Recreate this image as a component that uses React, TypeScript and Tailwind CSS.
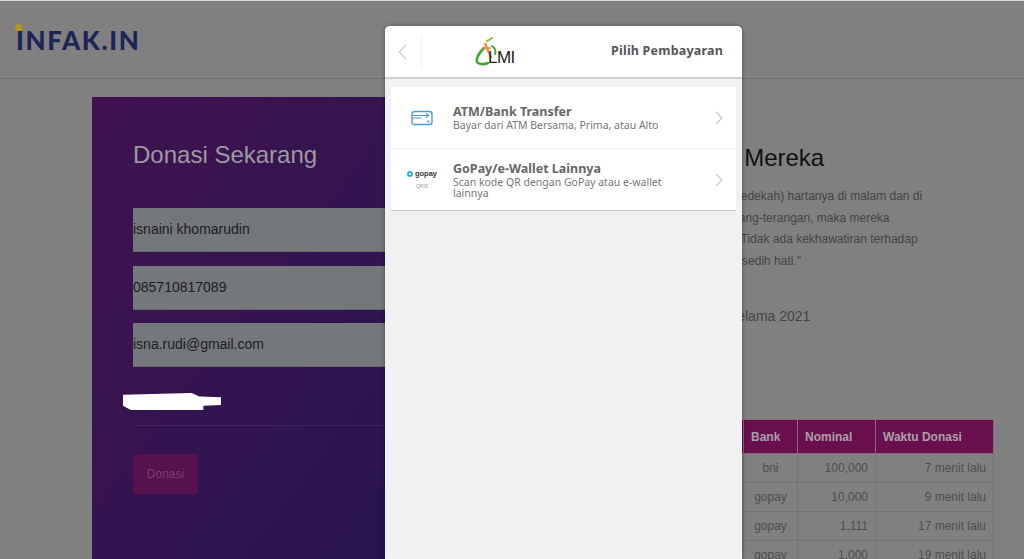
import React from "react";

const quoteLines = [
  "Orang-orang yang menginfakkan (sedekah) hartanya di malam dan di",
  "siang hari secara sembunyi dan terang-terangan, maka mereka",
  "mendapat pahala di sisi Tuhannya. Tidak ada kekhawatiran terhadap",
  "mereka dan tidak (pula) mereka bersedih hati.\"",
];

const donations = [
  { name: "Hamba Allah", bank: "bni", nominal: "100,000", time: "7 menit lalu" },
  { name: "Hamba Allah", bank: "gopay", nominal: "10,000", time: "9 menit lalu" },
  { name: "Hamba Allah", bank: "gopay", nominal: "1,111", time: "17 menit lalu" },
  { name: "Hamba Allah", bank: "gopay", nominal: "1,000", time: "19 menit lalu" },
];

const fields = ["isnaini khomarudin", "085710817089", "isna.rudi@gmail.com"];

const Chevron = () => (
  <svg width="8" height="14" viewBox="0 0 8 14" fill="none" stroke="#c9c9c9" strokeWidth="1.2">
    <path d="M1 1l6 6-6 6" />
  </svg>
);

const LmiLogo = () => (
  <div className="relative w-[36px] h-[30px]">
    <svg width="36" height="30" viewBox="0 0 36 30" fill="none" className="absolute left-0 top-0">
      <path d="M9 11C5 15 1 21 2 25c1 2 6 3 11 1" stroke="#3aaa35" strokeWidth="2.6" strokeLinecap="round" />
      <path d="M10 6l6 15" stroke="#f08a24" strokeWidth="2.2" />
      <path d="M7 11h9" stroke="#f08a24" strokeWidth="1.4" />
      <path d="M12 4c2-1 4-2 5-3" stroke="#8cc63f" strokeWidth="2" strokeLinecap="round" />
      <path d="M17 9c3 2 4 5 3 8" stroke="#3aaa35" strokeWidth="2" strokeLinecap="round" />
    </svg>
    <span className="absolute left-[13px] top-[12px] font-['Liberation_Sans',sans-serif] text-[17px] leading-[17px] text-[#222] tracking-[-0.5px]">
      LMI
    </span>
  </div>
);

const AtmIcon = () => (
  <svg width="22" height="16" viewBox="0 0 22 16" fill="none" stroke="#4b9bd8">
    <rect x="1" y="1.5" width="20" height="13" rx="2.5" strokeWidth="1.4" />
    <path d="M1.5 5.5h15M1.5 8h9" strokeWidth="1.2" />
    <path d="M15 3.5l2.5 2-2.5 2" strokeWidth="1.2" />
    <path d="M16 11.5h2.5" strokeWidth="1.4" />
  </svg>
);

const GopayIcon = () => (
  <div className="flex flex-col items-center w-[32px]">
    <div className="flex items-center gap-[2px]">
      <span className="w-[6px] h-[6px] rounded-full border-[2px] border-[#2fb5d8]" />
      <span className="font-['Liberation_Sans',sans-serif] font-bold text-[7.5px] leading-[8px] text-[#333]">gopay</span>
    </div>
    <span className="mt-[5px] font-['Liberation_Sans',sans-serif] text-[5px] leading-[6px] text-[#999]">QRIS</span>
  </div>
);

const PaymentRow = ({
  icon,
  title,
  desc,
  className,
}: {
  icon: React.ReactNode;
  title: string;
  desc: string;
  className: string;
}) => (
  <div className={`flex items-center bg-white pl-[16px] pr-[13px] ${className}`}>
    <div className="w-[30px] flex justify-center shrink-0">{icon}</div>
    <div className="ml-[16px] flex-1 pr-[40px]">
      <div className="font-bold text-[12.5px] leading-[16px] text-[#666]">{title}</div>
      <div className="text-[10.5px] leading-[11px] text-[#777]">{desc}</div>
    </div>
    <Chevron />
  </div>
);

export default function App() {
  return (
    <div className="relative h-[559px] w-[1024px] overflow-hidden bg-[#808080] font-['Liberation_Sans',sans-serif]">
      {/* page behind the dim */}
      <header className="h-[79px] border-t border-b border-t-[#d8d8d8] border-b-[#707070] flex items-center pl-[16px]">
        <div className="relative font-['Lato',sans-serif] font-black text-[26px] leading-none tracking-[1.6px] text-[#1d2557]">
          <span className="absolute left-[-1px] top-[-3px] w-[7px] h-[7px] rounded-full bg-[#b9980f]" />
          INFAK.IN
        </div>
      </header>

      <main className="flex pl-[92px] pt-[18px]">
        <section className="w-[460px] shrink-0 h-[600px] bg-gradient-to-br from-[#40124f] to-[#1d1350] pl-[41px] pt-[44px]">
          <h2 className="text-[24px] leading-[28px] text-[#9c9aa0]">Donasi Sekarang</h2>
          <div className="mt-[39px] flex flex-col gap-[13.5px]">
            {fields.map((value) => (
              <div key={value} className="h-[44px] flex items-center bg-[#74787d] border-b border-[#66686e] text-[14px] text-[#1c1c20]">
                {value}
              </div>
            ))}
          </div>
          <div className="relative mt-[58px] h-[1px] bg-[#41235f]">
            <span className="absolute left-[-10px] top-[-32px] w-[98px] h-[17px] bg-white [clip-path:polygon(0_10%,70%_0,78%_20%,100%_25%,100%_70%,82%_75%,82%_100%,8%_100%,0_75%)]" />
          </div>
          <button className="mt-[28px] w-[65px] h-[40px] rounded-[4px] bg-[#56114f] text-[12px] text-[#7c4079]">Donasi</button>
        </section>

        <section className="w-[442px] shrink-0">
          <h2 className="mt-[47px] text-[24px] leading-[28px] text-[#111] whitespace-nowrap">Infak Bahagiakan Mereka</h2>
          <div className="mt-[14px] text-[12px] leading-[21.6px] text-[#444] whitespace-nowrap">
            {quoteLines.map((line) => (
              <p key={line}>{line}</p>
            ))}
          </div>
          <p className="mt-[34px] text-[14px] leading-[20px] text-[#444] whitespace-nowrap">Total donasi yang terkumpul selama 2021</p>
          <p className="mt-[6px] font-['Open_Sans',sans-serif] text-[24px] leading-[30px] text-[#111]">Rp 3,443,443</p>
          <table className="mt-[57px] w-full text-[12px] border-collapse">
            <thead>
              <tr className="h-[34px] bg-[#6a0f4e] text-[#a9a0a8] font-bold text-left">
                <th className="px-[7px] border border-[#8a6a80]">Nama</th>
                <th className="w-[54px] px-[7px] border border-[#8a6a80]">Bank</th>
                <th className="w-[78px] px-[7px] border border-[#8a6a80]">Nominal</th>
                <th className="w-[118px] px-[7px] border border-[#8a6a80]">Waktu Donasi</th>
              </tr>
            </thead>
            <tbody className="text-[#4e4e4e]">
              {donations.map((d) => (
                <tr key={d.time} className="h-[29px]">
                  <td className="px-[7px] border border-[#747474]">{d.name}</td>
                  <td className="px-[7px] border border-[#747474] text-center">{d.bank}</td>
                  <td className="px-[7px] border border-[#747474] text-right">{d.nominal}</td>
                  <td className="px-[7px] border border-[#747474] text-right">{d.time}</td>
                </tr>
              ))}
            </tbody>
          </table>
        </section>
      </main>

      {/* payment popup over the page */}
      <div className="absolute left-[385px] top-[26px] w-[357px] h-[533px] rounded-t-[5px] overflow-hidden bg-[#f1f1f1] font-['Noto_Sans',sans-serif] shadow-[0_0_4px_rgba(0,0,0,0.4)]">
        <div className="h-[53px] bg-white border-b-2 border-[#cfcfcf] flex items-center">
          <div className="w-[37px] h-[32px] flex items-center pl-[13px] border-r border-[#f1f1f1]">
            <svg width="9" height="16" viewBox="0 0 9 16" fill="none" stroke="#cccccc" strokeWidth="1.2">
              <path d="M8 1L1 8l7 7" />
            </svg>
          </div>
          <div className="ml-[53px]">
            <LmiLogo />
          </div>
          <div className="ml-auto pr-[19px] font-bold text-[12.5px] tracking-[0.2px] text-[#555]">Pilih Pembayaran</div>
        </div>
        <div className="mx-[6px] mt-[8px] flex flex-col">
          <PaymentRow
            icon={<AtmIcon />}
            title="ATM/Bank Transfer"
            desc="Bayar dari ATM Bersama, Prima, atau Alto"
            className="h-[62px] border-b border-[#eeeeee]"
          />
          <PaymentRow
            icon={<GopayIcon />}
            title="GoPay/e-Wallet Lainnya"
            desc="Scan kode QR dengan GoPay atau e-wallet lainnya"
            className="h-[62px] border-b border-[#cfcfcf]"
          />
        </div>
      </div>
    </div>
  );
}
